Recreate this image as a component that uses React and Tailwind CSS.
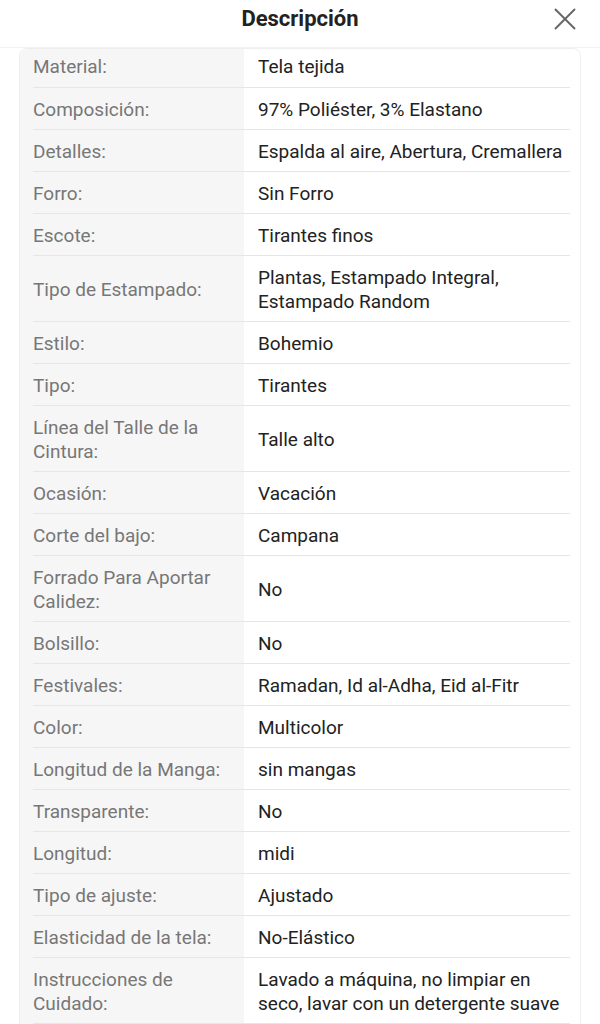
import { X } from 'lucide-react'

const rows = [
  ['Material:', 'Tela tejida'],
  ['Composición:', '97% Poliéster, 3% Elastano'],
  ['Detalles:', 'Espalda al aire, Abertura, Cremallera'],
  ['Forro:', 'Sin Forro'],
  ['Escote:', 'Tirantes finos'],
  ['Tipo de Estampado:', 'Plantas, Estampado Integral, Estampado Random'],
  ['Estilo:', 'Bohemio'],
  ['Tipo:', 'Tirantes'],
  ['Línea del Talle de la Cintura:', 'Talle alto'],
  ['Ocasión:', 'Vacación'],
  ['Corte del bajo:', 'Campana'],
  ['Forrado Para Aportar Calidez:', 'No'],
  ['Bolsillo:', 'No'],
  ['Festivales:', 'Ramadan, Id al-Adha, Eid al-Fitr'],
  ['Color:', 'Multicolor'],
  ['Longitud de la Manga:', 'sin mangas'],
  ['Transparente:', 'No'],
  ['Longitud:', 'midi'],
  ['Tipo de ajuste:', 'Ajustado'],
  ['Elasticidad de la tela:', 'No-Elástico'],
  ['Instrucciones de Cuidado:', 'Lavado a máquina, no limpiar en seco, lavar con un detergente suave'],
]

export default function App() {
  return (
    <div className="w-[600px] h-[1024px] overflow-hidden bg-white" style={{ fontFamily: 'Roboto, "Noto Sans", sans-serif' }}>
      {/* Header */}
      <div className="relative h-[48px] flex items-center justify-center border-b border-[#f2f2f2]">
        <h2 className="text-[22px] font-bold text-[#222] leading-none -mt-[10px]">Descripción</h2>
        <button className="absolute right-[16px] top-0 text-[#666]">
          <X className="w-[38px] h-[38px]" strokeWidth={1.2} />
        </button>
      </div>

      {/* Table */}
      <div className="mx-[19px] w-[562px] rounded-t-lg border border-[#eeeeee] overflow-hidden">
        {rows.map(([label, value], i) => (
          <div key={label} className="flex">
            <div className="w-[224px] shrink-0 bg-[#f6f6f6] pl-[13px]">
              <div className={`h-full flex items-center border-b border-[#e6e6e6] pr-[8px] text-[19px] leading-[24px] text-[#777] ${i === 0 ? 'pt-[6px] pb-[8px]' : 'pt-[10px] pb-[7px]'}`}>
                {label}
              </div>
            </div>
            <div className="flex-1 pr-[10px]">
              <div className={`h-full flex items-center border-b border-[#e6e6e6] pl-[14px] text-[19px] leading-[24px] text-[#222] ${i === 0 ? 'pt-[6px] pb-[8px]' : 'pt-[10px] pb-[7px]'}`}>
                {value}
              </div>
            </div>
          </div>
        ))}
      </div>
    </div>
  )
}
